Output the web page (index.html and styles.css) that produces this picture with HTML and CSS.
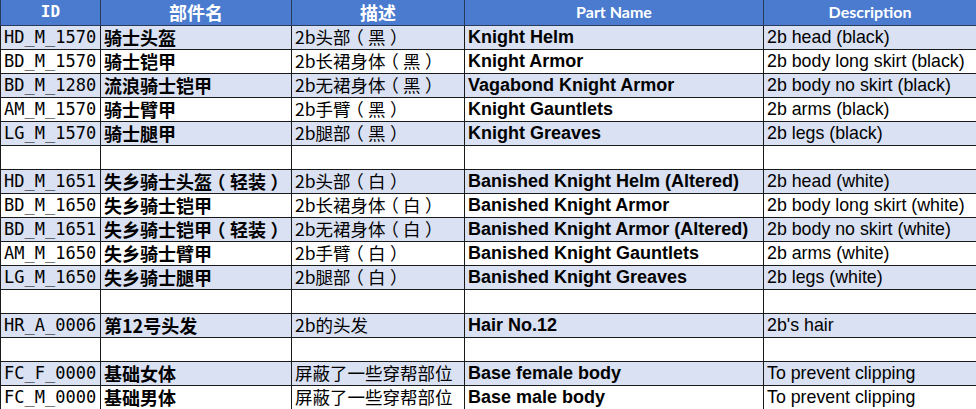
FILE: index.html
```html
<!DOCTYPE html>
<html lang="zh-CN">
<head>
<meta charset="utf-8">
<title>Parts</title>
<link rel="stylesheet" href="styles.css">
</head>
<body>
<table class="sheet">
  <colgroup>
    <col class="c-id"><col class="c-cn"><col class="c-desc"><col class="c-name"><col class="c-en">
  </colgroup>
  <thead>
    <tr class="head">
      <th class="h-id">ID</th>
      <th class="h-cjk">部件名</th>
      <th class="h-cjk">描述</th>
      <th class="h-lat">Part Name</th>
      <th class="h-lat">Description</th>
    </tr>
  </thead>
  <tbody>
    <tr class="alt"><td class="id">HD_M_1570</td><td class="cn">骑士头盔</td><td class="desc">2b头部<span class="fw">（</span>黑<span class="fw">）</span></td><td class="name">Knight Helm</td><td class="en">2b head (black)</td></tr>
    <tr><td class="id">BD_M_1570</td><td class="cn">骑士铠甲</td><td class="desc">2b长裙身体<span class="fw">（</span>黑<span class="fw">）</span></td><td class="name">Knight Armor</td><td class="en">2b body long skirt (black)</td></tr>
    <tr class="alt"><td class="id">BD_M_1280</td><td class="cn">流浪骑士铠甲</td><td class="desc">2b无裙身体<span class="fw">（</span>黑<span class="fw">）</span></td><td class="name">Vagabond Knight Armor</td><td class="en">2b body no skirt (black)</td></tr>
    <tr><td class="id">AM_M_1570</td><td class="cn">骑士臂甲</td><td class="desc">2b手臂<span class="fw">（</span>黑<span class="fw">）</span></td><td class="name">Knight Gauntlets</td><td class="en">2b arms (black)</td></tr>
    <tr class="alt"><td class="id">LG_M_1570</td><td class="cn">骑士腿甲</td><td class="desc">2b腿部<span class="fw">（</span>黑<span class="fw">）</span></td><td class="name">Knight Greaves</td><td class="en">2b legs (black)</td></tr>
    <tr><td></td><td></td><td></td><td></td><td></td></tr>
    <tr class="alt"><td class="id">HD_M_1651</td><td class="cn">失乡骑士头盔<span class="fw">（</span>轻装<span class="fw">）</span></td><td class="desc">2b头部<span class="fw">（</span>白<span class="fw">）</span></td><td class="name">Banished Knight Helm (Altered)</td><td class="en">2b head (white)</td></tr>
    <tr><td class="id">BD_M_1650</td><td class="cn">失乡骑士铠甲</td><td class="desc">2b长裙身体<span class="fw">（</span>白<span class="fw">）</span></td><td class="name">Banished Knight Armor</td><td class="en">2b body long skirt (white)</td></tr>
    <tr class="alt"><td class="id">BD_M_1651</td><td class="cn">失乡骑士铠甲<span class="fw">（</span>轻装<span class="fw">）</span></td><td class="desc">2b无裙身体<span class="fw">（</span>白<span class="fw">）</span></td><td class="name">Banished Knight Armor (Altered)</td><td class="en">2b body no skirt (white)</td></tr>
    <tr><td class="id">AM_M_1650</td><td class="cn">失乡骑士臂甲</td><td class="desc">2b手臂<span class="fw">（</span>白<span class="fw">）</span></td><td class="name">Banished Knight Gauntlets</td><td class="en">2b arms (white)</td></tr>
    <tr class="alt"><td class="id">LG_M_1650</td><td class="cn">失乡骑士腿甲</td><td class="desc">2b腿部<span class="fw">（</span>白<span class="fw">）</span></td><td class="name">Banished Knight Greaves</td><td class="en">2b legs (white)</td></tr>
    <tr><td></td><td></td><td></td><td></td><td></td></tr>
    <tr class="alt"><td class="id">HR_A_0006</td><td class="cn">第12号头发</td><td class="desc">2b的头发</td><td class="name">Hair No.12</td><td class="en">2b's hair</td></tr>
    <tr><td></td><td></td><td></td><td></td><td></td></tr>
    <tr class="alt"><td class="id">FC_F_0000</td><td class="cn">基础女体</td><td class="desc">屏蔽了一些穿帮部位</td><td class="name">Base female body</td><td class="en">To prevent clipping</td></tr>
    <tr><td class="id">FC_M_0000</td><td class="cn">基础男体</td><td class="desc">屏蔽了一些穿帮部位</td><td class="name">Base male body</td><td class="en">To prevent clipping</td></tr>
  </tbody>
</table>
</body>
</html>
```

FILE: styles.css
```css
html, body {
  margin: 0;
  padding: 0;
  background: #ffffff;
}

.sheet {
  border-collapse: collapse;
  table-layout: fixed;
  width: 976px;
  color: #000;
}

.c-id { width: 100px; }
.c-cn { width: 191px; }
.c-desc { width: 173px; }
.c-name { width: 299px; }
.c-en { width: 213px; }

.sheet th,
.sheet td {
  border: 1px solid #1a1a1a;
  padding: 0 0 0 3px;
  white-space: nowrap;
  overflow: hidden;
  vertical-align: middle;
  line-height: 20px;
}

.head {
  height: 25px;
  background: #4a7bcf;
}

.sheet thead th {
  border-top: none;
  color: #ffffff;
  font-weight: 700;
  text-align: center;
  padding: 0;
  border-color: #2a3a5a;
}

.h-id {
  font-family: "DejaVu Sans Mono", "Liberation Mono", monospace;
  font-size: 16px;
}

.h-cjk {
  font-family: "Noto Sans CJK SC", sans-serif;
  font-size: 18px;
}

.h-lat {
  font-family: Lato, "Noto Sans", sans-serif;
  font-size: 16px;
}

.sheet tbody tr {
  height: 24px;
}

.alt {
  background: #d9e1f2;
}

.id {
  font-family: "DejaVu Sans Mono", "Liberation Mono", monospace;
  font-size: 17px;
  padding-left: 4px;
}

.cn {
  font-family: "Noto Sans CJK SC", sans-serif;
  font-weight: 700;
  font-size: 18px;
}

.desc {
  font-family: "Noto Sans CJK SC", sans-serif;
  font-weight: 400;
  font-size: 17.5px;
}

.fw {
  display: inline-block;
  width: 1em;
  text-align: center;
  font-feature-settings: "halt" 1;
}

.name {
  font-family: "Liberation Sans", Arial, sans-serif;
  font-weight: 700;
  font-size: 18px;
}

.en {
  font-family: "Liberation Sans", Arial, sans-serif;
  font-size: 17.8px;
}
```
